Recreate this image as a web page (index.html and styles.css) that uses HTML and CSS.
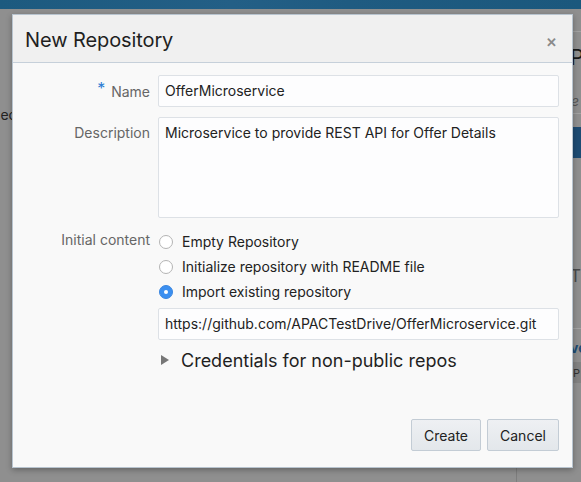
FILE: index.html
```html
<!DOCTYPE html>
<html>
<head>
<meta charset="utf-8">
<link rel="stylesheet" href="styles.css">
</head>
<body>
<div class="page">
  <div class="topbar"></div>
  <div class="bg-line bg-line1"></div>
  <div class="bg-title">Po</div>
  <div class="bg-sub">e</div>
  <div class="bg-line bg-line2"></div>
  <div class="bg-btn"></div>
  <div class="bg-th">Th</div>
  <div class="bg-line bg-line3"></div>
  <div class="bg-ve">ve</div>
  <div class="bg-box">P</div>
  <div class="bg-jec">jec</div>
  <div class="bg-vline"></div>
</div>

<div class="dialog">
  <div class="dlg-head">
    <h1 class="dlg-title">New Repository</h1>
    <span class="dlg-close">&#x2715;</span>
  </div>
  <div class="dlg-body">
    <div class="form">
      <label class="lbl lbl-name"><span class="req">*</span> Name</label>
      <div class="field"><div class="input">OfferMicroservice</div></div>

      <label class="lbl lbl-desc">Description</label>
      <div class="field"><div class="textarea">Microservice to provide REST API for Offer Details</div></div>

      <label class="lbl lbl-init">Initial content</label>
      <div class="field radios">
        <div class="radio-row"><span class="radio"></span><span>Empty Repository</span></div>
        <div class="radio-row"><span class="radio"></span><span>Initialize repository with README file</span></div>
        <div class="radio-row"><span class="radio checked"></span><span>Import existing repository</span></div>
        <div class="input url">https://github.com/APACTestDrive/OfferMicroservice.git</div>
        <div class="cred"><span class="tri"></span><span>Credentials for non-public repos</span></div>
      </div>
    </div>
    <div class="actions">
      <button class="btn btn-create">Create</button>
      <button class="btn btn-cancel">Cancel</button>
    </div>
  </div>
</div>
</body>
</html>
```

FILE: styles.css
```css
* { box-sizing: border-box; }
html, body { margin: 0; padding: 0; }
body {
  width: 581px;
  height: 482px;
  overflow: hidden;
  background: #8f8f8f;
  font-family: "Inter", "Liberation Sans", sans-serif;
  position: relative;
}
.page { position: absolute; inset: 0; overflow: hidden; }
.topbar {
  position: absolute; left: 0; top: 0; width: 581px; height: 9px;
  background: linear-gradient(90deg, #1d5a7f 0%, #235f86 40%, #1f5b81 60%, #1b587d 100%);
}
.bg-line { position: absolute; left: 572px; width: 9px; height: 1px; background: #a2a2a2; }
.bg-line1 { top: 31px; }
.bg-line2 { top: 113px; }
.bg-line3 { top: 328px; left: 515px; width: 66px; }
.bg-title { position: absolute; left: 570px; top: 44px; font-size: 22px; color: #1a1a1a; }
.bg-sub { position: absolute; left: 571px; top: 92px; font-size: 14px; font-style: italic; color: #555; }
.bg-btn { position: absolute; left: 572px; top: 127px; width: 9px; height: 31px; background: #1d4b73; }
.bg-th { position: absolute; left: 570px; top: 266px; font-size: 17px; color: #4a4a4a; }
.bg-ve { position: absolute; left: 570px; top: 339px; font-size: 14px; font-weight: bold; color: #1d4b73; }
.bg-box { position: absolute; left: 571px; top: 362px; width: 10px; height: 21px; background: #828282; font-size: 11px; color: #333; padding: 4px 0 0 2px; }
.bg-jec { position: absolute; left: -3px; top: 106px; font-size: 14px; color: #222; }
.bg-vline { position: absolute; left: 516px; top: 440px; width: 1px; height: 42px; background: #7d7d7d; }

.dialog {
  position: absolute;
  left: 12px; top: 14px;
  width: 561px; height: 454px;
  background: #f9f9f9;
  border: 1px solid #b8c4cf;
  box-shadow: 0 2px 6px rgba(0,0,0,0.3);
  display: flex; flex-direction: column;
}
.dlg-head {
  height: 48px;
  background: #f0f0f0;
  border-bottom: 1px solid #c6d0da;
  display: flex; align-items: center; justify-content: space-between;
  padding: 0 16px 0 12px;
}
.dlg-title {
  margin: 0; font-size: 20px; font-weight: 400; color: #1f1f1f;
  padding-top: 2px; letter-spacing: -0.1px;
}
.dlg-close { font-size: 13px; font-weight: bold; color: #8a8a8a; padding-top: 6px; margin-right: -1px; }
.dlg-body {
  flex: 1;
  padding: 12px 13px 16px 0;
  display: flex; flex-direction: column; justify-content: space-between;
}
.form {
  display: grid;
  grid-template-columns: 137px 1fr;
  column-gap: 8px;
  row-gap: 10px;
  font-size: 14px;
}
.lbl { text-align: right; color: #666; font-size: 14px; }
.lbl-name { padding-top: 6px; }
.lbl-desc { padding-top: 7px; }
.lbl-init { padding-top: 3px; }
.req { color: #2b7cd3; font-size: 16px; position: relative; top: -3px; margin-right: 2px; }
.input, .textarea {
  background: #fdfdfe;
  border: 1px solid #dde1e6;
  border-radius: 2px;
  color: #222;
  padding: 0 6px;
}
.input { height: 32px; line-height: 30px; }
.textarea { height: 101px; padding-top: 6px; line-height: 18px; }
.radios { display: flex; flex-direction: column; padding-top: 1px; }
.radio-row { display: flex; align-items: center; height: 25px; color: #222; }
.radio {
  width: 14px; height: 14px; border-radius: 50%;
  border: 1px solid #b4b4b4; background: #fff;
  margin: 0 9px 0 1px; flex: none;
}
.radio.checked {
  background: #3b8ff0; border-color: #3a86e0;
  display: flex; align-items: center; justify-content: center;
}
.radio.checked::after { content: ""; width: 4px; height: 4px; border-radius: 50%; background: #fff; }
.url { margin-top: 4px; }
.cred { display: flex; align-items: center; margin-top: 4px; height: 32px; font-size: 18px; color: #1f1f1f; }
.tri {
  width: 0; height: 0; margin: 0 12px 0 3px;
  border-top: 5px solid transparent; border-bottom: 5px solid transparent;
  border-left: 8px solid #777;
}
.actions { display: flex; justify-content: flex-end; gap: 6px; }
.btn {
  height: 32px;
  font-family: inherit; font-size: 14px; color: #222;
  background: linear-gradient(#eef0f3, #e3e7eb);
  border: 1px solid #c3ccd5; border-radius: 2px;
  padding: 0 12px;
}
.btn-create { width: 70px; }
.btn-cancel { width: 72px; }
```
